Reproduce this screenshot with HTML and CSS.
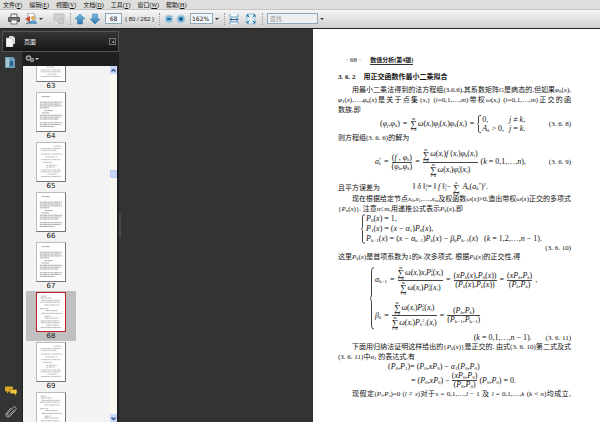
FILE: index.html
```html
<!DOCTYPE html>
<html lang="zh-CN">
<head>
<meta charset="utf-8">
<title>数值分析(第4版)</title>
<link rel="stylesheet" href="styles.css">
</head>
<body>
<svg class="defs" aria-hidden="true">
  <defs>
    <linearGradient id="blue" x1="0" y1="0" x2="0" y2="1"><stop offset="0" stop-color="#7fc0e4"/><stop offset="1" stop-color="#2773aa"/></linearGradient>
    <symbol id="thumbA" viewBox="0 0 30 40">
      <g fill="none" stroke="#999" stroke-width=".9" stroke-dasharray="3 .4 5 .3 2 .5">
        <path d="M5 3.500h9M3 9.500h24M3 11.500h23M3 13.500h24M3 15.500h10M8 18.500h9M5 21h8M3 23.500h24M3 25.500h23M3 27.500h20M3 31.500h24M3 33.500h23M3 35.500h16"/>
      </g>
    </symbol>
    <symbol id="thumbB" viewBox="0 0 30 40">
      <g fill="none" stroke="#b0b0b0" stroke-width=".9" stroke-dasharray="2 .5 4 .4 3 .8">
        <path d="M18 3h8M4 5.500h22M4 7.500h17M4 11.500h23M9 14.500h13M4 17.500h22M6 20.500h10M10 23.500h12M10 25.500h9M4 28.500h22M4 30.500h22M11 33h11M4 35.500h22"/>
      </g>
    </symbol>
    <symbol id="thumbC" viewBox="0 0 30 40">
      <g fill="none" stroke="#aaa" stroke-width=".9" stroke-dasharray="4 .5 2 .5">
        <path d="M4 3h6M4 5h12M5 7.500h20M3 9.500h22M8 12.500h16M3 16.500h9M9 18.500h13M5 21.500h22M8 24.500h7M8 26.500h15M4 29.500h20M4 31.500h20M10 34h14M4 36.500h22"/>
      </g>
    </symbol>
  </defs>
</svg>

<nav class="menu">
  <button>文件(<u>F</u>)</button><button>编辑(<u>E</u>)</button><button>视图(<u>V</u>)</button><button>文档(<u>D</u>)</button><button>工具(<u>T</u>)</button><button>窗口(<u>W</u>)</button><button>帮助(<u>H</u>)</button>
</nav>

<div class="toolbar">
  <button class="tool" aria-label="打印"><svg viewBox="0 0 12 12"><path d="M3 5V1h6v4" fill="#eee" stroke="#666"/><rect y="4" width="12" height="5" rx="1" fill="#555"/><path d="M1 6h10" stroke="#999"/><path d="M3 7h6v4H3z" fill="#f7f7f7" stroke="#777"/></svg></button>
  <button class="tool mail" aria-label="协作"><svg viewBox="0 0 12 12"><path d="M3 0h5l2 2v7H3z" fill="#fff" stroke="#8a9aa8"/><path d="M0 6l5-3v6z" fill="#c84a36"/><circle cx="8" cy="5" r="2" fill="#e2aa52"/><path d="M4 11c0-5 8-5 8 0z" fill="#5a98c8"/><path d="M1 11l4-2" stroke="#456"/></svg></button>
  <span class="caret"></span>
  <button class="tool faded" aria-label="签名" disabled><svg viewBox="0 0 12 12"><path d="M1 1h10v6H8l-2 3V7H1z" fill="#d2d2d2" stroke="#bbb"/><circle cx="8" cy="8" r="3" fill="#ccc" stroke="#b8b8b8"/></svg></button>
  <span class="sep"></span>
  <button class="tool arrow" aria-label="上一页"><svg viewBox="0 0 12 12"><path d="M6 1l5 5H8.500v5h-5V6H1z" fill="url(#blue)" stroke="#3a80b0" stroke-width=".6"/></svg></button>
  <button class="tool arrow" aria-label="下一页"><svg viewBox="0 0 12 12"><path d="M6 11L1 6h2.500V1h5v5H11z" fill="url(#blue)" stroke="#3a80b0" stroke-width=".6"/></svg></button>
  <input class="field pageno" aria-label="页码" value="68">
  <span class="count">( 80 / 262 )</span>
  <span class="sep"></span>
  <button class="tool" aria-label="缩小"><svg viewBox="0 0 12 12"><circle cx="6" cy="6" r="4" fill="#7fb9dc" stroke="#b9cfdd"/><path d="M4 6h4" stroke="#165080" stroke-width="1.500"/></svg></button>
  <button class="tool" aria-label="放大"><svg viewBox="0 0 12 12"><circle cx="6" cy="6" r="4" fill="#7fb9dc" stroke="#b9cfdd"/><path d="M4 6h4M6 4v4" stroke="#165080" stroke-width="1.500"/></svg></button>
  <select class="field zoom" aria-label="缩放"><option>162%</option></select>
  <span class="caret"></span>
  <span class="sep"></span>
  <button class="tool fit" aria-label="适合宽度"><svg viewBox="0 0 12 12"><path d="M2 1v3h8V1M2 11V9h8v2" fill="#f4fafd" stroke="#6ba3c6"/><path d="M2 6.500h8M3.500 5L2 6.500L3.500 8M8.500 5L10 6.500L8.500 8" fill="none" stroke="#2b6f9e"/></svg></button>
  <button class="tool fit" aria-label="适合页面"><svg viewBox="0 0 12 12"><path d="M2 1h8v10H2z" fill="#e9f4fa" stroke="#9cc2d8"/><path d="M2 2l2.500 2.500M10 2L7.500 4.500M2 10l2.500-2.500M10 10L7.500 7.500M2 4V2h2M8 2h2v2M2 8v2h2M8 10h2V8" fill="none" stroke="#2b78ac"/></svg></button>
  <span class="sep"></span>
  <input class="field search" aria-label="查找" placeholder="查找">
  <span class="caret"></span>
</div>

<main class="work">
  <aside class="side">
    <header class="side-head">
      <svg class="ico" viewBox="0 0 10 11"><path d="M3 0h4l2 2v6H3z" fill="#ddd"/><path d="M0 2h5l2 2v7H0z" fill="#f6f6f6" stroke="#aaa" stroke-width=".5"/></svg>
      <h2>页面</h2>
      <button class="fold" aria-label="折叠"></button>
    </header>
    <div class="side-body">
      <div class="rail">
        <svg class="ico" viewBox="0 0 10 11"><path d="M0 0h8l2 2v9H0z" fill="#6d9bb8"/><path d="M1 1h3v9H1z" fill="#a5c4d6"/><path d="M5 4h3v6L6.500 8L5 10z" fill="#2b6288"/></svg>
        <svg class="ico low" viewBox="0 0 12 10"><path d="M1 0h6q1 0 1 1v3q0 1-1 1H4L2 7V5H1Q0 5 0 4V1q0-1 1-1z" fill="#d6a726"/><path d="M6 3h5q1 0 1 1v2q0 1-1 1v2L9 7H6Q5 7 5 6V4q0-1 1-1z" fill="#f0c63f" stroke="#75590e" stroke-width=".5"/></svg>
        <svg class="ico clip" viewBox="0 0 12 12"><path d="M9 4L4.500 9Q3 10 2.500 9T3 7L8 1.500Q9.500 0 10.700 1.300T10.500 4L5 10.300Q3 12 1.500 10.500T1.500 7L6 2" fill="none" stroke="#aaa"/></svg>
      </div>
      <div class="panel">
        <div class="options"><svg viewBox="0 0 10 8"><circle cx="3.500" cy="3" r="2" fill="none" stroke="#aaa" stroke-width="1.500"/><circle cx="7" cy="5" r="1.500" fill="none" stroke="#999" stroke-width="1.500"/></svg><span class="caret light"></span></div>
        <div class="listing">
          <ol class="thumbs">
            <li><svg><use href="#thumbB"/></svg><span>63</span></li>
            <li><svg><use href="#thumbA"/></svg><span>64</span></li>
            <li><svg><use href="#thumbB"/></svg><span>65</span></li>
            <li><svg><use href="#thumbA"/></svg><span>66</span></li>
            <li><svg><use href="#thumbA"/></svg><span>67</span></li>
            <li class="current"><svg><use href="#thumbC"/></svg><span>68</span></li>
            <li><svg><use href="#thumbB"/></svg><span>69</span></li>
            <li><svg><use href="#thumbC"/></svg></li>
          </ol>
          <div class="scroll">
            <button aria-label="向上"><svg viewBox="0 0 7 7"><path d="M1.500 4.500l2-2l2 2" fill="none" stroke="#3c5688" stroke-width="1.500"/></svg></button>
            <span class="grip"></span>
            <button aria-label="向下"><svg viewBox="0 0 7 7"><path d="M1.500 2.500l2 2l2-2" fill="none" stroke="#3c5688" stroke-width="1.500"/></svg></button>
          </div>
        </div>
      </div>
    </div>
  </aside>
  <div class="splitter"><span></span></div>

  <article class="paper">
    <p class="running">· 68 ·<b>数值分析(第4版)</b></p>
    <h1><span>3. 6. 2</span>用正交函数作最小二乘拟合</h1>
    <p class="full indent">用最小二乘法得到的法方程组(3.6.6),其系数矩阵<i>G</i>是病态的,但如果<i>φ</i><sub>0</sub>(<i>x</i>),</p>
    <p class="full"><i>φ</i><sub>1</sub>(<i>x</i>),…,<i>φ<sub>n</sub></i>(<i>x</i>)是关于点集{<i>x<sub>i</sub></i>} (<i>i</i>=0,1,…,<i>m</i>)带权<i>ω</i>(<i>x<sub>i</sub></i>) (<i>i</i>=0,1,…,<i>m</i>)正交的函</p>
    <p>数族,即</p>

    <div class="eq eq8">
      <span>(<i>φ<sub>j</sub></i>,<i>φ<sub>k</sub></i>)</span><span>=</span>
      <span class="run"><span class="sum"><small>m</small><b>∑</b><small>i=0</small></span><i>ω</i>(<i>x<sub>i</sub></i>)<i>φ<sub>j</sub></i>(<i>x<sub>i</sub></i>)<i>φ<sub>k</sub></i>(<i>x<sub>i</sub></i>)</span><span>=</span>
      <span class="braced"><svg class="brace" viewBox="0 0 4 40" preserveAspectRatio="none"><path d="M4 1Q1.500 1 1.500 3V18L.5 20L1.500 22V37Q1.500 39 4 39"/></svg><span class="cases"><span>0,</span><span><i>j</i> ≠ <i>k</i>,</span><span><i>A<sub>k</sub></i> &gt; 0,</span><span><i>j</i> = <i>k</i>.</span></span></span>
      <span class="num">(3. 6. 8)</span>
    </div>
    <p>则方程组(3. 6. 6)的解为</p>
    <div class="eq eq9">
      <span><i>a</i><span class="pair"><small>*</small><small>k</small></span></span><span>=</span>
      <span class="frac"><span>(<i>f</i> , <i>φ<sub>k</sub></i>)</span><span>(<i>φ<sub>k</sub></i>,<i>φ<sub>k</sub></i>)</span></span><span>=</span>
      <span class="frac"><span class="run"><span class="sum"><small>m</small><b>∑</b><small>i=0</small></span><i>ω</i>(<i>x<sub>i</sub></i>)<i>f</i> (<i>x<sub>i</sub></i>)<i>φ<sub>k</sub></i>(<i>x<sub>i</sub></i>)</span><span class="run"><span class="sum"><small>m</small><b>∑</b><small>i=0</small></span><i>ω</i>(<i>x<sub>i</sub></i>)<i>φ</i><span class="pair"><small>2</small><small>k</small></span>(<i>x<sub>i</sub></i>)</span></span>
      <span>(<i>k</i> = 0,1,…,<i>n</i>),</span>
      <span class="num">(3. 6. 9)</span>
    </div>
    <div class="eq error">
      <span class="words">且平方误差为</span>
      <span class="run">‖ <i>δ</i> ‖<span class="pair"><small>2</small><small>2</small></span>= ‖ <i>f</i> ‖<span class="pair"><small>2</small><small>2</small></span>− <span class="sum"><small>n</small><b>∑</b><small>k=0</small></span> <i>A<sub>k</sub></i>(<i>a<sub>k</sub></i><sup>*</sup>)<sup>2</sup>.</span>
    </div>
    <p class="full indent">现在根据给定节点<i>x</i><sub>0</sub>,<i>x</i><sub>1</sub>,…,<i>x<sub>m</sub></i>及权函数<i>ω</i>(<i>x</i>)&gt;0,造出带权<i>ω</i>(<i>x</i>)正交的多项式</p>
    <p>{<i>P<sub>n</sub></i>(<i>x</i>)}. 注意<i>n</i>≤<i>m</i>,用递推公式表示<i>P<sub>k</sub></i>(<i>x</i>),即</p>
    <div class="eq system">
      <span class="braced"><svg class="brace" viewBox="0 0 4 40" preserveAspectRatio="none"><path d="M4 1Q1.500 1 1.500 3V18L.5 20L1.500 22V37Q1.500 39 4 39"/></svg><span class="rows">
        <span><i>P</i><sub>0</sub>(<i>x</i>) = 1,</span>
        <span><i>P</i><sub>1</sub>(<i>x</i>) = (<i>x</i> − <i>α</i><sub>1</sub>)<i>P</i><sub>0</sub>(<i>x</i>),</span>
        <span><i>P</i><sub>k+1</sub>(<i>x</i>) = (<i>x</i> − <i>α</i><sub>k+1</sub>)<i>P<sub>k</sub></i>(<i>x</i>) − <i>β<sub>k</sub>P</i><sub>k−1</sub>(<i>x</i>) &nbsp; (<i>k</i> = 1,2,…,<i>n</i> − 1).</span>
      </span></span>
    </div>
    <div class="eq tail"><span class="num">(3. 6. 10)</span></div>
    <p>这里<i>P<sub>k</sub></i>(<i>x</i>)是首项系数为1的<i>k</i> 次多项式. 根据<i>P<sub>k</sub></i>(<i>x</i>)的正交性,得</p>
    <div class="eq recur">
      <span class="braced"><svg class="brace" viewBox="0 0 4 40" preserveAspectRatio="none"><path d="M4 1Q1.500 1 1.500 3V18L.5 20L1.500 22V37Q1.500 39 4 39"/></svg><span class="rows">
        <span class="line"><span><i>α</i><sub>k+1</sub></span><span>=</span>
          <span class="frac"><span class="run"><span class="sum"><small>m</small><b>∑</b><small>i=0</small></span><i>ω</i>(<i>x<sub>i</sub></i>)<i>x<sub>i</sub>P</i><span class="pair"><small>2</small><small>k</small></span>(<i>x<sub>i</sub></i>)</span><span class="run"><span class="sum"><small>m</small><b>∑</b><small>i=0</small></span><i>ω</i>(<i>x<sub>i</sub></i>)<i>P</i><span class="pair"><small>2</small><small>k</small></span>(<i>x<sub>i</sub></i>)</span></span><span>=</span>
          <span class="frac"><span>(<i>xP<sub>k</sub></i>(<i>x</i>),<i>P<sub>k</sub></i>(<i>x</i>))</span><span>(<i>P<sub>k</sub></i>(<i>x</i>),<i>P<sub>k</sub></i>(<i>x</i>))</span></span><span>=</span>
          <span class="frac"><span>(<i>xP<sub>k</sub></i>,<i>P<sub>k</sub></i>)</span><span>(<i>P<sub>k</sub></i>,<i>P<sub>k</sub></i>)</span></span><span>,</span></span>
        <span class="line"><span><i>β<sub>k</sub></i></span><span>=</span>
          <span class="frac"><span class="run"><span class="sum"><small>m</small><b>∑</b><small>i=0</small></span><i>ω</i>(<i>x<sub>i</sub></i>)<i>P</i><span class="pair"><small>2</small><small>k</small></span>(<i>x<sub>i</sub></i>)</span><span class="run"><span class="sum"><small>m</small><b>∑</b><small>i=0</small></span><i>ω</i>(<i>x<sub>i</sub></i>)<i>P</i><span class="pair"><small>2</small><small>k−1</small></span>(<i>x<sub>i</sub></i>)</span></span><span>=</span>
          <span class="frac"><span>(<i>P<sub>k</sub></i>,<i>P<sub>k</sub></i>)</span><span>(<i>P</i><sub>k−1</sub>,<i>P</i><sub>k−1</sub>)</span></span></span>
      </span></span>
    </div>
    <div class="eq tail"><span>(<i>k</i> = 0,1,…,<i>n</i> − 1).</span><span class="num">(3. 6. 11)</span></div>
    <p class="full indent">下面用归纳法证明这样给出的{<i>P<sub>k</sub></i>(<i>x</i>)}是正交的. 由式(3. 6. 10)第二式及式</p>
    <p>(3. 6. 11)中<i>α</i><sub>1</sub> 的表达式,有</p>
    <div class="eq proof"><span>(<i>P</i><sub>0</sub>,<i>P</i><sub>1</sub>)= (<i>P</i><sub>0</sub>,<i>xP</i><sub>0</sub>) − <i>α</i><sub>1</sub>(<i>P</i><sub>0</sub>,<i>P</i><sub>0</sub>)</span></div>
    <div class="eq proof second"><span>= (<i>P</i><sub>0</sub>,<i>xP</i><sub>0</sub>) −</span><span class="frac"><span>(<i>xP</i><sub>0</sub>,<i>P</i><sub>0</sub>)</span><span>(<i>P</i><sub>0</sub>,<i>P</i><sub>0</sub>)</span></span><span>(<i>P</i><sub>0</sub>,<i>P</i><sub>0</sub>) = 0.</span></div>
    <p class="full indent">现假定(<i>P<sub>l</sub></i>,<i>P<sub>s</sub></i>)=0 (<i>l</i> ≠ <i>s</i>)对于<i>s</i> = 0,1,…,<i>l</i> − 1 及 <i>l</i> = 0,1,…,<i>k</i> (<i>k</i> &lt; <i>n</i>)均成立,</p>
  </article>
</main>
</body>
</html>
```

FILE: styles.css
```css
* { box-sizing: border-box; }
body {
  margin: 0;
  height: 100vh;
  display: flex;
  flex-direction: column;
  overflow: hidden;
  background: #333;
  font-family: "Liberation Sans", "Noto Sans CJK SC", sans-serif;
  font-size: 6px;
  color: #111;
}
button { border: 0; padding: 0; background: none; font: inherit; color: inherit; }
svg { display: block; }
.defs { position: absolute; width: 0; height: 0; }

/* Menu and toolbar */
.menu {
  flex: none;
  display: flex;
  gap: 7px;
  height: 9px;
  padding-left: 3px;
  background: #dededc;
  font-family: "Liberation Serif", "Noto Sans CJK SC", serif;
  line-height: 8px;
}
.toolbar {
  flex: none;
  display: flex;
  align-items: center;
  height: 19px;
  padding: 0 0 1px 8px;
  background: linear-gradient(#f6f6f6, #e2e2e2 50%, #cfcfcf);
  border-top: 1px solid #c4c4c4;
}
.tool { flex: none; width: 12px; height: 12px; }
.tool svg { width: 100%; height: 100%; }
.mail { margin-left: 5px; }
.faded { margin-left: 10px; }
.arrow + .arrow { margin-left: 3px; }
.fit + .fit { margin-left: 5px; }
.caret {
  flex: none;
  margin-left: 2px;
  border: 2px solid transparent;
  border-top-color: #333;
  border-bottom-width: 0;
}
.light { border-top-color: #ccc; }
.sep {
  flex: none;
  width: 1px;
  height: 12px;
  margin: 0 3px 0 5px;
  border-left: 1px dotted #999;
}
.field {
  height: 11px;
  margin: 0;
  padding: 0 2px;
  border: 1px solid #8fa9b8;
  border-radius: 0;
  background: #f4f7f9;
  font: 6px "DejaVu Sans", "Noto Sans CJK SC", sans-serif;
  color: #111;
  appearance: none;
}
.pageno { width: 17px; margin-left: 4px; text-align: center; }
.count { width: 29px; margin-left: 3px; font-family: "Liberation Sans", sans-serif; font-size: 6px; white-space: nowrap; }
.zoom { width: 23px; margin-left: 3px; padding: 0 1px; }
.search { width: 51px; margin-left: 1px; background: #eeefef; }
.search::placeholder { color: #999; }

/* Navigation pane */
.work { flex: 1; display: flex; min-height: 0; border-top: 1px solid #222; }
.side { flex: none; width: 119px; display: flex; flex-direction: column; padding-top: 2px; }
.side-head {
  flex: none;
  display: flex;
  align-items: center;
  height: 21px;
  margin-left: 2px;
  padding: 0 2px 0 3px;
  border: 1px solid #555;
  background: linear-gradient(#353535, #151515);
  color: #eee;
}
.side-head h2 { flex: 1; margin: 0 0 0 8px; font-size: 6px; font-weight: 400; }
.ico { width: 10px; height: 11px; }
.fold { width: 7px; height: 7px; border: 1px solid #777; display: grid; place-items: center; }
.fold::before { content: ""; border: 1px solid transparent; border-right: 2px solid #eee; border-left: 0; }
.side-body { flex: 1; display: flex; min-height: 0; }
.rail { width: 23px; display: flex; flex-direction: column; padding: 5px 0 4px 5px; border-right: 1px solid #222; }
.low { width: 12px; margin-top: auto; }
.clip { width: 12px; height: 12px; margin-top: 9px; }
.panel { flex: 1; display: flex; flex-direction: column; min-width: 0; background: #1f1f1f; }
.options { flex: none; display: flex; align-items: center; height: 14px; padding-left: 2px; }
.options svg { width: 10px; height: 8px; }
.options .caret { margin-left: 0; }
.listing { flex: 1; display: flex; min-height: 0; margin-right: 2px; overflow: hidden; background: #f3f3f3; }
.thumbs { flex: 1; margin: -25px 0 0 3px; padding: 0; list-style: none; }
.thumbs li {
  width: 50px;
  height: 50px;
  display: flex;
  flex-direction: column;
  align-items: center;
  padding-top: 1px;
  font: 7px/8px "DejaVu Sans", sans-serif;
}
.thumbs svg { flex: none; width: 30px; height: 40px; background: #fff; border: 1px solid #bbb; border-right-color: #777; border-bottom-color: #777; }
.thumbs .current { background: #c0c0c0; }
.thumbs .current svg { border: 1px solid #c22020; }
.scroll { width: 7px; display: flex; flex-direction: column; background: #f8f8f0; }
.scroll button { height: 8px; background: #c8d8fa; }
.scroll .grip { height: 8px; margin: 96px 0 auto; background: #c8d8fa; border: 1px solid #b5c8f0; border-radius: 1px; }
.splitter { flex: none; width: 3px; display: flex; align-items: center; }
.splitter span { width: 2px; height: 24px; background: #484848; }

/* Document page */
.paper {
  flex: 1;
  min-width: 0;
  margin-left: 191px;
  padding: 26px 29px 0 25px;
  background: #fff;
  font: 7px/10px "Liberation Serif", "Noto Sans CJK SC", serif;
  color: #111;
  white-space: nowrap;
}
.paper p { margin: 0; height: 10px; }
.paper i { line-height: 0; }
.paper sub, .paper sup { font-size: 5px; line-height: 0; }
.paper sub { vertical-align: -1px; }
.paper sup { vertical-align: 3px; }
.paper .running { display: flex; gap: 9px; height: 17px; padding-left: 8px; }
.running b { height: 10px; border-bottom: 1px solid #333; font-size: 6px; }
.paper h1 { display: flex; gap: 8px; margin: 0; height: 13px; font-size: 7px; font-weight: 700; }
.full { text-align-last: justify; }
.paper .indent { padding-left: 14px; }

/* Displayed formulas */
.eq { display: flex; align-items: center; gap: 3px; font-size: 8px; }
.num { margin-left: auto; font-size: 7px; }
.words { font-size: 7px; }
.run { display: block; line-height: 14px; }
.sum { display: inline-flex; flex-direction: column; align-items: center; height: 14px; margin-right: 1px; vertical-align: middle; }
.sum b { font-size: 9px; line-height: 7px; font-weight: 400; }
.sum small { height: 4px; font-size: 4px; line-height: 4px; }
.pair { display: inline-flex; flex-direction: column; vertical-align: middle; }
.pair small { font-size: 4px; line-height: 4px; font-style: italic; }
.frac { display: flex; flex-direction: column; text-align: center; line-height: 8px; }
.frac > :first-child { border-bottom: 1px solid #444; }
.braced { display: grid; grid-template-columns: 4px auto; gap: 1px; }
.brace { width: 4px; height: 0; min-height: 100%; fill: none; stroke: #444; }
.brace path { vector-effect: non-scaling-stroke; }
.cases { display: grid; grid-template-columns: auto auto; column-gap: 5px; line-height: 9px; }
.rows { display: flex; flex-direction: column; }
.line { display: flex; align-items: center; gap: 3px; }
.eq8 { height: 18px; padding-left: 42px; }
.eq9 { height: 38px; padding-left: 37px; }
.error { height: 13px; gap: 33px; }
.system { height: 30px; padding-left: 23px; }
.tail { height: 8px; justify-content: flex-end; gap: 14px; }
.tail .num { margin-left: 0; }
.recur { height: 72px; padding-left: 32px; }
.recur .rows { gap: 6px; }
.proof { height: 10px; padding-left: 50px; }
.second { height: 17px; padding-left: 73px; gap: 2px; }
```
